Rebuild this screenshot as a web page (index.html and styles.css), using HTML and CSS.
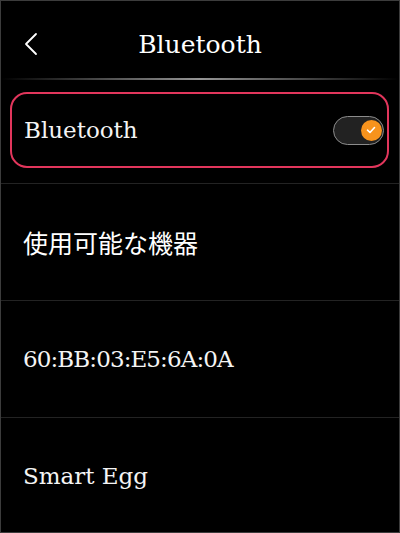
FILE: index.html
```html
<!DOCTYPE html>
<html lang="ja">

<head>
    <meta charset="UTF-8">
    <meta name="viewport" content="width=device-width, initial-scale=1.0">
    <title>Bluetooth</title>
    <link rel="stylesheet" href="styles.css">
</head>

<body>

    <div class="screen">

        <!-- Header -->
        <header class="topbar">
            <button class="back" aria-label="Back">
                <svg width="14" height="24" viewBox="0 0 14 24">
                    <polyline points="12,2 2,12 12,22" fill="none" stroke="#fff" stroke-width="1.8" stroke-linecap="round" stroke-linejoin="round" />
                </svg>
            </button>
            <h1 class="title">Bluetooth</h1>
            <span></span>
        </header>
        <div class="glow-line"></div>

        <!-- Bluetooth switch -->
        <div class="toggle-row">
            <div class="focus-box">
                <span class="label">Bluetooth</span>
                <span class="switch on">
                    <span class="knob">
                        <svg width="10" height="8" viewBox="0 0 10 8">
                            <polyline points="1.5,4.2 4,6.5 8.5,1.5" fill="none" stroke="#fff" stroke-width="1.6" stroke-linecap="round" stroke-linejoin="round" />
                        </svg>
                    </span>
                </span>
            </div>
        </div>

        <!-- Device list -->
        <div class="row"><span class="label cjk">使用可能な機器</span></div>
        <div class="row"><span class="label mac">60:BB:03:E5:6A:0A</span></div>
        <div class="row"><span class="label">Smart Egg</span></div>

    </div>

</body>

</html>
```

FILE: styles.css
```css
* {
    box-sizing: border-box;
}

body {
    margin: 0;
    background-color: #000;
    font-family: "DejaVu Serif", "Noto Sans CJK JP", serif;
    color: #fff;
}

.screen {
    width: 400px;
    height: 533px;
    border: 1px solid #3c3c3c;
    background-color: #000;
    overflow: hidden;
}

/* Header */
.topbar {
    height: 77px;
    display: grid;
    grid-template-columns: 1fr auto 1fr;
    align-items: center;
    padding-top: 9px;
}

.back {
    justify-self: start;
    margin-left: 23px;
    background: none;
    border: none;
    padding: 0;
    display: flex;
}

.title {
    margin: 0;
    font-size: 25px;
    font-weight: normal;
    color: #fff;
}

.glow-line {
    height: 2px;
    background: linear-gradient(to right, rgba(255, 255, 255, 0) 0%, rgba(200, 200, 200, 0.75) 50%, rgba(255, 255, 255, 0) 100%);
}

/* Switch row */
.toggle-row {
    padding: 12px 10px 15px 9px;
}

.focus-box {
    height: 76px;
    border: 2.5px solid #e2365c;
    border-radius: 17px;
    display: flex;
    align-items: center;
    justify-content: space-between;
    padding: 0 3px 0 12px;
}

.label {
    font-size: 23px;
    color: #f4f4f4;
    white-space: nowrap;
}

.cjk {
    font-family: "Noto Sans CJK JP", sans-serif;
    font-size: 25px;
    color: #fff;
}

.mac {
    letter-spacing: -0.9px;
}

.switch {
    width: 51px;
    height: 29px;
    border-radius: 15px;
    border: 1.5px solid #8c8c8c;
    background-color: #222;
    display: flex;
    align-items: center;
    justify-content: flex-end;
    padding: 0 1.5px;
}

.knob {
    width: 21px;
    height: 21px;
    border-radius: 50%;
    background-color: #f7931d;
    display: flex;
    align-items: center;
    justify-content: center;
}

/* List rows */
.row {
    height: 117px;
    border-top: 1px solid #232323;
    display: flex;
    align-items: center;
    padding-left: 22px;
}
```
